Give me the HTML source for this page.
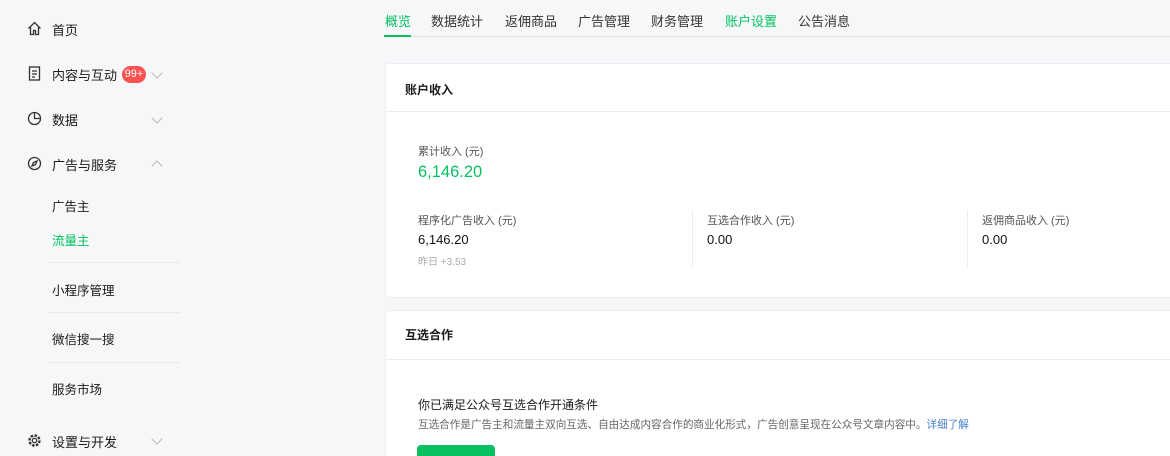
<!DOCTYPE html><html><head><meta charset="utf-8"><style>
*{margin:0;padding:0;box-sizing:border-box}
html,body{width:1170px;height:456px;overflow:hidden}
body{background:#f6f7f9;font-family:"Liberation Sans","Noto Sans CJK SC",sans-serif;color:#1a1a1a;position:relative}
.a{position:absolute;white-space:nowrap}
.nav{font-size:13px;color:#1a1a1a}
.ic{position:absolute;left:27px}
.chev{position:absolute;left:153px;width:8px;height:8px;border-right:1px solid #b8b8b8;border-bottom:1px solid #b8b8b8;transform:rotate(45deg)}
.sub{font-size:12.5px;left:52px}
.hr{position:absolute;left:48px;width:132px;height:1px;background:#e7e8ea}
.tab{position:absolute;top:11px;font-size:13px;color:#333}
.card{position:absolute;left:385px;width:800px;background:#fff;border:1px solid #ebedf0;border-radius:4px}
.lbl{font-size:11px;color:#555}
.val{font-size:13px;color:#111}
</style></head><body>
<svg class="ic" style="top:21px" width="15" height="15" viewBox="0 0 15 15" fill="none" stroke="#333" stroke-width="1.3"><path d="M1.5 7.5 7.5 1.5 13.5 7.5M3.5 6v7.5h3v-4h2v4h3V6"/></svg>
<div class="a nav" style="left:52px;top:20px">首页</div>
<svg class="ic" style="top:66px" width="15" height="15" viewBox="0 0 15 15" fill="none" stroke="#333" stroke-width="1.3"><rect x="2.5" y="1" width="10" height="13"/><path d="M5 5h5M5 8h5M5 11h3"/></svg>
<div class="a nav" style="left:52px;top:65px">内容与互动</div>
<div class="a" style="left:122px;top:66px;width:24px;height:17px;border-radius:9px;background:#fa5151;color:#fff;font-size:11px;line-height:17px;text-align:center">99+</div>
<div class="chev" style="top:69px"></div>
<svg class="ic" style="top:111px" width="15" height="15" viewBox="0 0 15 15" fill="none" stroke="#333" stroke-width="1.3"><circle cx="7.5" cy="7.5" r="6"/><path d="M7.5 1.5v6h6"/></svg>
<div class="a nav" style="left:52px;top:110px">数据</div>
<div class="chev" style="top:114px"></div>
<svg class="ic" style="top:156px" width="15" height="15" viewBox="0 0 15 15" fill="none" stroke="#333" stroke-width="1.3"><circle cx="7.5" cy="7.5" r="6"/><path d="M10 5 8.5 8.5 5 10 6.5 6.5Z"/></svg>
<div class="a nav" style="left:52px;top:155px">广告与服务</div>
<div class="chev" style="top:162px;transform:rotate(225deg)"></div>
<div class="a sub" style="top:196px">广告主</div>
<div class="a sub" style="top:230px;color:#07c160">流量主</div>
<div class="hr" style="top:262px"></div>
<div class="a sub" style="top:280px">小程序管理</div>
<div class="hr" style="top:312px"></div>
<div class="a sub" style="top:329px">微信搜一搜</div>
<div class="hr" style="top:362px"></div>
<div class="a sub" style="top:379px">服务市场</div>
<svg class="ic" style="top:433px" width="15" height="15" viewBox="0 0 15 15" fill="none" stroke="#333" stroke-width="1.3"><circle cx="7.5" cy="7.5" r="2.2"/><circle cx="7.5" cy="7.5" r="5" stroke-dasharray="2.5 1.4" stroke-width="2.4"/></svg>
<div class="a nav" style="left:52px;top:432px">设置与开发</div>
<div class="chev" style="top:435px"></div>

<div class="a" style="left:384px;top:36px;width:786px;height:1px;background:#e0e1e3"></div>
<div class="a" style="left:384px;top:35px;width:27px;height:2px;background:#07c160"></div>
<div class="tab" style="left:385px;color:#07c160">概览</div>
<div class="tab" style="left:431px">数据统计</div>
<div class="tab" style="left:505px">返佣商品</div>
<div class="tab" style="left:578px">广告管理</div>
<div class="tab" style="left:651px">财务管理</div>
<div class="tab" style="left:725px;color:#07c160">账户设置</div>
<div class="tab" style="left:798px">公告消息</div>

<div class="card" style="top:63px;height:235px">
<div class="a" style="left:19px;top:17px;font-size:12px;font-weight:bold">账户收入</div>
<div class="a" style="left:0;top:47px;width:800px;height:1px;background:#ebedf0"></div>
<div class="a lbl" style="left:32px;top:79px">累计收入 (元)</div>
<div class="a" style="left:32px;top:99px;font-size:16.5px;color:#07c160">6,146.20</div>
<div class="a lbl" style="left:32px;top:148px">程序化广告收入 (元)</div>
<div class="a val" style="left:32px;top:168px">6,146.20</div>
<div class="a" style="left:32px;top:189px;font-size:10px;color:#aaa">昨日 +3.53</div>
<div class="a" style="left:306px;top:146px;width:1px;height:57px;background:#ebedf0"></div>
<div class="a lbl" style="left:321px;top:148px">互选合作收入 (元)</div>
<div class="a val" style="left:321px;top:168px">0.00</div>
<div class="a" style="left:581px;top:146px;width:1px;height:57px;background:#ebedf0"></div>
<div class="a lbl" style="left:596px;top:148px">返佣商品收入 (元)</div>
<div class="a val" style="left:596px;top:168px">0.00</div>
</div>
<div class="card" style="top:310px;height:160px">
<div class="a" style="left:19px;top:15px;font-size:12px;font-weight:bold">互选合作</div>
<div class="a" style="left:0;top:48px;width:800px;height:1px;background:#ebedf0"></div>
<div class="a" style="left:32px;top:85px;font-size:12px">你已满足公众号互选合作开通条件</div>
<div class="a" style="left:32px;top:106px;font-size:10.6px;color:#666">互选合作是广告主和流量主双向互选、自由达成内容合作的商业化形式，广告创意呈现在公众号文章内容中。<span style="color:#4a7fd0">详细了解</span></div>
<div class="a" style="left:31px;top:134px;width:78px;height:30px;border-radius:4px;background:#07c160"></div>
</div>
</body></html>
